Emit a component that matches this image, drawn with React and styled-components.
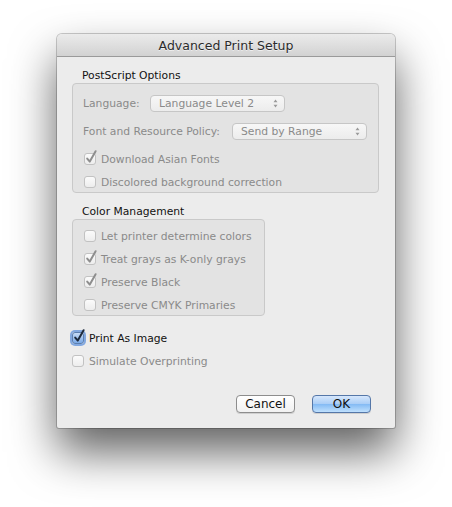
import React from 'react';
import styled, { createGlobalStyle } from 'styled-components';

const GlobalStyle = createGlobalStyle`
  body {
    margin: 0;
    background: #ffffff;
    font-family: "DejaVu Sans", "Liberation Sans", sans-serif;
  }
`;

const Page = styled.div`
  width: 452px;
  height: 507px;
  padding: 34px 0 0 57px;
  box-sizing: border-box;
`;

const Window = styled.div`
  width: 338px;
  height: 394px;
  background: #ececec;
  border-radius: 5px 5px 2px 2px;
  box-shadow: 0 0 0 1px rgba(0, 0, 0, 0.2), 0 24px 46px rgba(0, 0, 0, 0.62);
  display: flex;
  flex-direction: column;
  overflow: hidden;
`;

const TitleBar = styled.div`
  height: 22px;
  flex-shrink: 0;
  background: linear-gradient(#ebebeb, #d2d2d2);
  border-bottom: 1px solid #9a9a9a;
  display: flex;
  align-items: center;
  justify-content: center;
  font-size: 12.5px;
  color: #2b2b2b;
  text-shadow: 0 1px 0 rgba(255, 255, 255, 0.6);
`;

const Body = styled.div`
  flex: 1;
  padding: 12px 16px 15px 15px;
  display: flex;
  flex-direction: column;
  font-size: 10.75px;
  white-space: nowrap;
`;

const GroupLabel = styled.div`
  height: 14px;
  line-height: 14px;
  padding-left: 10px;
  color: #111;
  margin-top: ${(p) => p.$top || 0}px;
`;

const Group = styled.div`
  width: ${(p) => p.$width}px;
  box-sizing: border-box;
  background: #e3e3e3;
  border: 1px solid #c9c9c9;
  border-radius: 4px;
  padding: ${(p) => p.$pad};
  display: flex;
  flex-direction: column;
  gap: 3px;
`;

const PopupRow = styled.div`
  display: flex;
  align-items: center;
  height: 17px;
  margin-bottom: ${(p) => p.$after || 0}px;
`;

const FieldLabel = styled.span`
  color: #8a8a8a;
  width: ${(p) => p.$width}px;
`;

const Popup = styled.div`
  width: 135px;
  height: 17px;
  box-sizing: border-box;
  border: 1px solid #c6c6c6;
  border-radius: 4px;
  background: linear-gradient(#f7f7f7, #ececec);
  display: flex;
  align-items: center;
  justify-content: space-between;
  padding: 0 6px 0 8px;
  color: #8a8a8a;
`;

const Row = styled.div`
  display: flex;
  align-items: center;
  height: 20px;
  gap: 5px;
  padding-left: ${(p) => p.$indent || 0}px;
  color: ${(p) => (p.$active ? '#111' : '#8a8a8a')};
`;

const Box = styled.span`
  position: relative;
  width: 12px;
  height: 12px;
  box-sizing: border-box;
  flex-shrink: 0;
  border-radius: 3px;
  border: 1px solid ${(p) => (p.$active ? '#5c7fb0' : '#c2c2c2')};
  background: ${(p) =>
    p.$active ? 'linear-gradient(#c7dcf7, #7aa9e6)' : 'linear-gradient(#fbfbfb, #ededed)'};
  box-shadow: ${(p) => (p.$active ? '0 0 0 2px rgba(95, 145, 220, 0.75)' : 'none')};
`;

const Check = styled.svg`
  position: absolute;
  left: 0;
  top: -4px;
  overflow: visible;
`;

const Arrows = styled.svg`
  flex-shrink: 0;
`;

const Spacer = styled.div`
  height: ${(p) => p.$h}px;
  flex-shrink: 0;
`;

const Buttons = styled.div`
  display: flex;
  justify-content: flex-end;
  gap: 17px;
  padding-right: 8px;
`;

const Button = styled.div`
  width: 59px;
  height: 18px;
  box-sizing: border-box;
  border-radius: 4px;
  border: 1px solid ${(p) => (p.$primary ? '#5577a8' : '#8d8d8d')};
  background: ${(p) =>
    p.$primary
      ? 'linear-gradient(#d6e7fc 0%, #a9cdf6 50%, #83baf4 51%, #bfe0fd 100%)'
      : 'linear-gradient(#ffffff, #f1f1f1)'};
  box-shadow: 0 1px 0 rgba(0, 0, 0, 0.12);
  display: flex;
  align-items: center;
  justify-content: center;
  font-size: 12px;
  color: #111;
`;

const Checkbox = ({ checked, active, indent, children }) => (
  <Row $active={active} $indent={indent}>
    <Box $active={active}>
      {checked && (
        <Check width="12" height="14" viewBox="0 0 12 14">
          <path
            d="M2.2 8.6 L4.8 11.6 L10.6 1.2"
            fill="none"
            stroke={active ? '#1d2a3d' : '#8e8e8e'}
            strokeWidth="2"
            strokeLinecap="round"
            strokeLinejoin="round"
          />
        </Check>
      )}
    </Box>
    <span>{children}</span>
  </Row>
);

const UpDown = () => (
  <Arrows width="5" height="9" viewBox="0 0 5 9">
    <path d="M2.5 0.5 L4.5 3.3 L0.5 3.3 Z M2.5 8.5 L4.5 5.7 L0.5 5.7 Z" fill="#9a9a9a" />
  </Arrows>
);

export default function App() {
  return (
    <Page>
      <GlobalStyle />
      <Window>
        <TitleBar>Advanced Print Setup</TitleBar>
        <Body>
          <GroupLabel>PostScript Options</GroupLabel>
          <Group $width={307} $pad="11px 10px 0 10px">
            <PopupRow $after={8}>
              <FieldLabel $width={67}>Language:</FieldLabel>
              <Popup>
                <span>Language Level 2</span>
                <UpDown />
              </Popup>
            </PopupRow>
            <PopupRow $after={6}>
              <FieldLabel $width={149}>Font and Resource Policy:</FieldLabel>
              <Popup>
                <span>Send by Range</span>
                <UpDown />
              </Popup>
            </PopupRow>
            <Checkbox checked indent={1}>Download Asian Fonts</Checkbox>
            <Checkbox indent={1}>Discolored background correction</Checkbox>
          </Group>

          <GroupLabel $top={12}>Color Management</GroupLabel>
          <Group $width={193} $pad="6px 10px 0 11px">
            <Checkbox>Let printer determine colors</Checkbox>
            <Checkbox checked>Treat grays as K-only grays</Checkbox>
            <Checkbox checked>Preserve Black</Checkbox>
            <Checkbox>Preserve CMYK Primaries</Checkbox>
          </Group>

          <Spacer $h={12} />
          <Checkbox checked active>Print As Image</Checkbox>
          <Spacer $h={3} />
          <Checkbox>Simulate Overprinting</Checkbox>

          <Spacer $h={24} />
          <Buttons>
            <Button>Cancel</Button>
            <Button $primary>OK</Button>
          </Buttons>
        </Body>
      </Window>
    </Page>
  );
}
